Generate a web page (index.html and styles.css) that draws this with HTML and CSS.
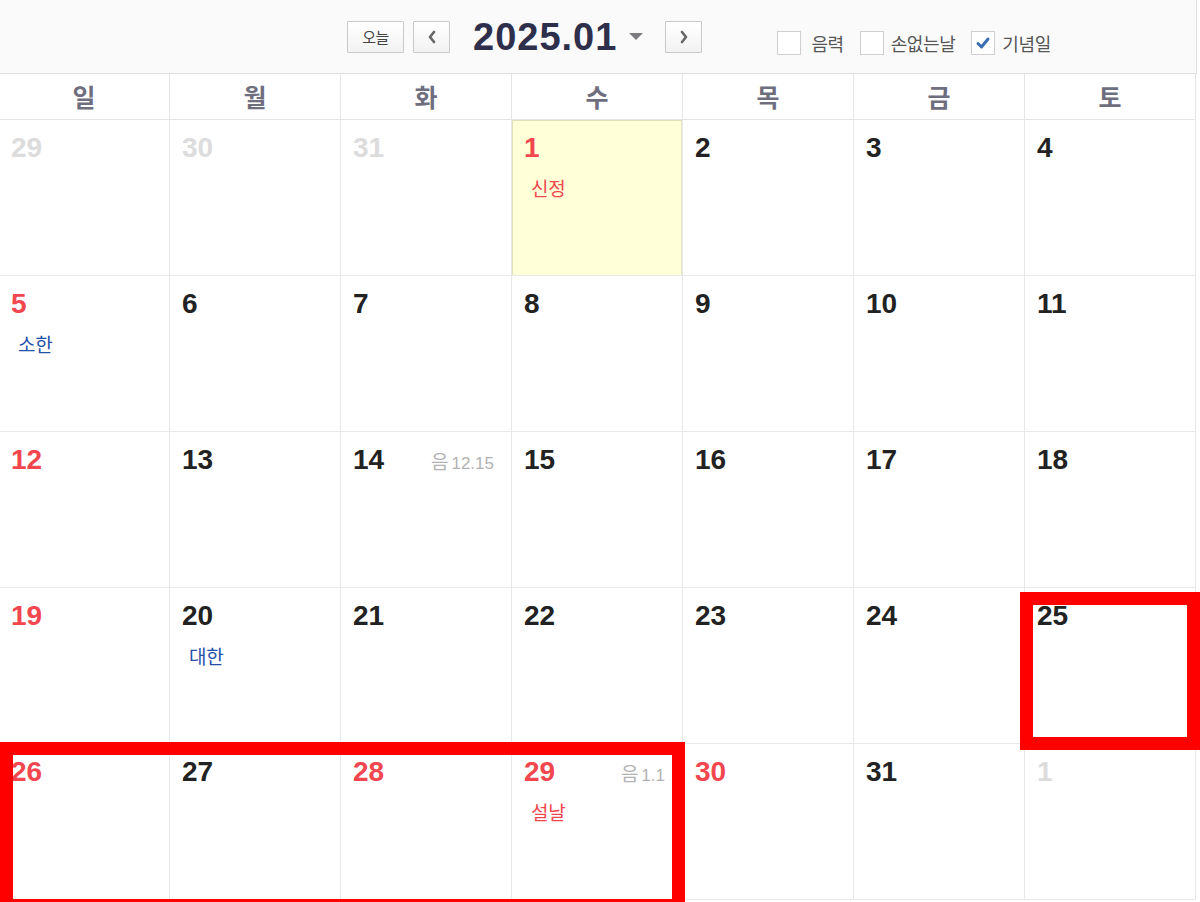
FILE: index.html
```html
<!DOCTYPE html>
<html lang="ko">
<head>
<meta charset="utf-8">
<title>2025.01 달력</title>
<link rel="stylesheet" href="styles.css">
</head>
<body>
<div class="topbar">
  <button class="btn btn-today">오늘</button>
  <button class="btn btn-arrow btn-prev" aria-label="이전">
    <svg width="10" height="14" viewBox="0 0 10 14"><polyline points="7,2 3,7 7,12" fill="none" stroke="#666" stroke-width="2.6" stroke-linejoin="round" stroke-linecap="round"/></svg>
  </button>
  <div class="title">2025.01</div>
  <span class="caret"></span>
  <button class="btn btn-arrow btn-next" aria-label="다음">
    <svg width="10" height="14" viewBox="0 0 10 14"><polyline points="3,2 7,7 3,12" fill="none" stroke="#666" stroke-width="2.6" stroke-linejoin="round" stroke-linecap="round"/></svg>
  </button>
  <div class="checks">
    <label class="chk"><span class="box"></span><span class="chk-text">음력</span></label>
    <label class="chk"><span class="box"></span><span class="chk-text">손없는날</span></label>
    <label class="chk"><span class="box checked"><svg width="16" height="14" viewBox="0 0 16 14"><polyline points="3,7.5 6.5,11 13,3" fill="none" stroke="#3b6fb5" stroke-width="3" stroke-linecap="round" stroke-linejoin="round"/></svg></span><span class="chk-text">기념일</span></label>
  </div>
</div>

<div class="grid">
  <div class="dow">일</div>
  <div class="dow">월</div>
  <div class="dow">화</div>
  <div class="dow">수</div>
  <div class="dow">목</div>
  <div class="dow">금</div>
  <div class="dow">토</div>

  <div class="cell"><div class="top"><span class="num other">29</span></div></div>
  <div class="cell"><div class="top"><span class="num other">30</span></div></div>
  <div class="cell"><div class="top"><span class="num other">31</span></div></div>
  <div class="cell today"><div class="top"><span class="num red">1</span></div><div class="label red">신정</div></div>
  <div class="cell"><div class="top"><span class="num">2</span></div></div>
  <div class="cell"><div class="top"><span class="num">3</span></div></div>
  <div class="cell"><div class="top"><span class="num">4</span></div></div>

  <div class="cell"><div class="top"><span class="num red">5</span></div><div class="label blue">소한</div></div>
  <div class="cell"><div class="top"><span class="num">6</span></div></div>
  <div class="cell"><div class="top"><span class="num">7</span></div></div>
  <div class="cell"><div class="top"><span class="num">8</span></div></div>
  <div class="cell"><div class="top"><span class="num">9</span></div></div>
  <div class="cell"><div class="top"><span class="num">10</span></div></div>
  <div class="cell"><div class="top"><span class="num">11</span></div></div>

  <div class="cell"><div class="top"><span class="num red">12</span></div></div>
  <div class="cell"><div class="top"><span class="num">13</span></div></div>
  <div class="cell"><div class="top"><span class="num">14</span><span class="lunar"><span class="lunar-k">음</span>12.15</span></div></div>
  <div class="cell"><div class="top"><span class="num">15</span></div></div>
  <div class="cell"><div class="top"><span class="num">16</span></div></div>
  <div class="cell"><div class="top"><span class="num">17</span></div></div>
  <div class="cell"><div class="top"><span class="num">18</span></div></div>

  <div class="cell"><div class="top"><span class="num red">19</span></div></div>
  <div class="cell"><div class="top"><span class="num">20</span></div><div class="label blue">대한</div></div>
  <div class="cell"><div class="top"><span class="num">21</span></div></div>
  <div class="cell"><div class="top"><span class="num">22</span></div></div>
  <div class="cell"><div class="top"><span class="num">23</span></div></div>
  <div class="cell"><div class="top"><span class="num">24</span></div></div>
  <div class="cell"><div class="top"><span class="num">25</span></div></div>

  <div class="cell"><div class="top"><span class="num red">26</span></div></div>
  <div class="cell"><div class="top"><span class="num">27</span></div></div>
  <div class="cell"><div class="top"><span class="num red">28</span></div></div>
  <div class="cell"><div class="top"><span class="num red">29</span><span class="lunar"><span class="lunar-k">음</span>1.1</span></div><div class="label red">설날</div></div>
  <div class="cell"><div class="top"><span class="num red">30</span></div></div>
  <div class="cell"><div class="top"><span class="num">31</span></div></div>
  <div class="cell"><div class="top"><span class="num other">1</span></div></div>
</div>

<div class="mark mark-sat"></div>
<div class="mark mark-holiday"></div>
</body>
</html>
```

FILE: styles.css
```css
* { box-sizing: border-box; }

html, body {
  margin: 0;
  padding: 0;
  background: #ffffff;
  overflow: hidden;
}

body {
  position: relative;
  width: 1200px;
  height: 902px;
  font-family: "Liberation Sans", "Noto Sans CJK KR", sans-serif;
}

/* ---------- top bar ---------- */
.topbar {
  display: flex;
  align-items: center;
  width: 1197px;
  height: 74px;
  padding-left: 347px;
  background: #fafafa;
  border-bottom: 1px solid #dedede;
  border-right: 1px solid #e2e2e2;
}

.btn {
  display: flex;
  align-items: center;
  justify-content: center;
  height: 32px;
  margin: 0;
  padding: 0;
  border: 1px solid #c9c9c9;
  border-radius: 1px;
  background: linear-gradient(#ffffff, #f2f2f2);
  font-family: "Noto Sans CJK KR", "Liberation Sans", sans-serif;
  color: #444;
  cursor: pointer;
}

.btn-today {
  width: 57px;
  font-size: 15px;
  letter-spacing: -0.5px;
}

.btn-arrow { width: 37px; }
.btn-prev { margin-left: 9px; }

.title {
  margin-left: 23px;
  font-family: "Liberation Sans", sans-serif;
  font-weight: bold;
  font-size: 38px;
  letter-spacing: 1px;
  color: #2e2f4b;
  line-height: 40px;
}

.caret {
  width: 0;
  height: 0;
  margin-left: 12px;
  margin-top: -1px;
  border-left: 7px solid transparent;
  border-right: 7px solid transparent;
  border-top: 7px solid #7a7a80;
}

.btn-next { margin-left: 22px; }

.checks {
  display: flex;
  align-items: center;
  margin-left: 75px;
  margin-top: 12px;
}

.chk {
  display: flex;
  align-items: center;
  margin-right: 16px;
}

.box {
  display: flex;
  align-items: center;
  justify-content: center;
  width: 24px;
  height: 24px;
  border: 1px solid #cfcfcf;
  background: #fff;
}

.chk-text {
  margin-left: 7px;
  font-family: "Noto Sans CJK KR", sans-serif;
  font-size: 18px;
  color: #555;
  letter-spacing: -0.4px;
}

.chk:first-child .chk-text { margin-left: 10px; }

/* ---------- grid ---------- */
.grid {
  display: grid;
  grid-template-columns: repeat(7, 171px);
  grid-template-rows: 46px repeat(5, 156px);
  margin-left: -1px;
  width: 1197px;
}

.dow {
  display: flex;
  align-items: center;
  justify-content: center;
  border-right: 1px solid #e6e6e6;
  border-bottom: 1px solid #e3e3e3;
  font-family: "Noto Sans CJK KR", sans-serif;
  font-weight: bold;
  font-size: 25px;
  color: #6e6e7e;
  padding-bottom: 2px;
}

.cell {
  border-right: 1px solid #e8e8e8;
  border-bottom: 1px solid #e8e8e8;
  padding: 11px 17px 0 12px;
}

.cell.today {
  background: #ffffd8;
  box-shadow: inset 1px 1px 0 #e0e0bc, inset -1px 0 0 #e6e6c4;
}

.top {
  display: flex;
  align-items: center;
  justify-content: space-between;
  height: 34px;
}

.num {
  font-family: "Liberation Sans", sans-serif;
  font-weight: bold;
  font-size: 28px;
  line-height: 34px;
  color: #222;
}

.num.red { color: #f2474e; }
.num.other { color: #dcdcdc; }

.lunar {
  font-family: "Liberation Sans", sans-serif;
  font-size: 17px;
  color: #b2b2b2;
  padding-top: 1px;
}

.lunar-k {
  font-family: "Noto Sans CJK KR", sans-serif;
  font-size: 19px;
  margin-right: 3px;
}

.label {
  margin-top: 10px;
  margin-left: 7px;
  font-family: "Noto Sans CJK KR", sans-serif;
  font-size: 19px;
  line-height: 26px;
  letter-spacing: -0.3px;
}

.label.red { color: #f0474e; }
.label.blue { color: #2450a8; }

/* ---------- overlay marks ---------- */
.mark {
  position: absolute;
  border: 13px solid #ff0000;
}

.mark-sat {
  left: 1020px;
  top: 592px;
  width: 180px;
  height: 158px;
}

.mark-holiday {
  left: 0;
  top: 742px;
  width: 685px;
  height: 170px;
}
```
